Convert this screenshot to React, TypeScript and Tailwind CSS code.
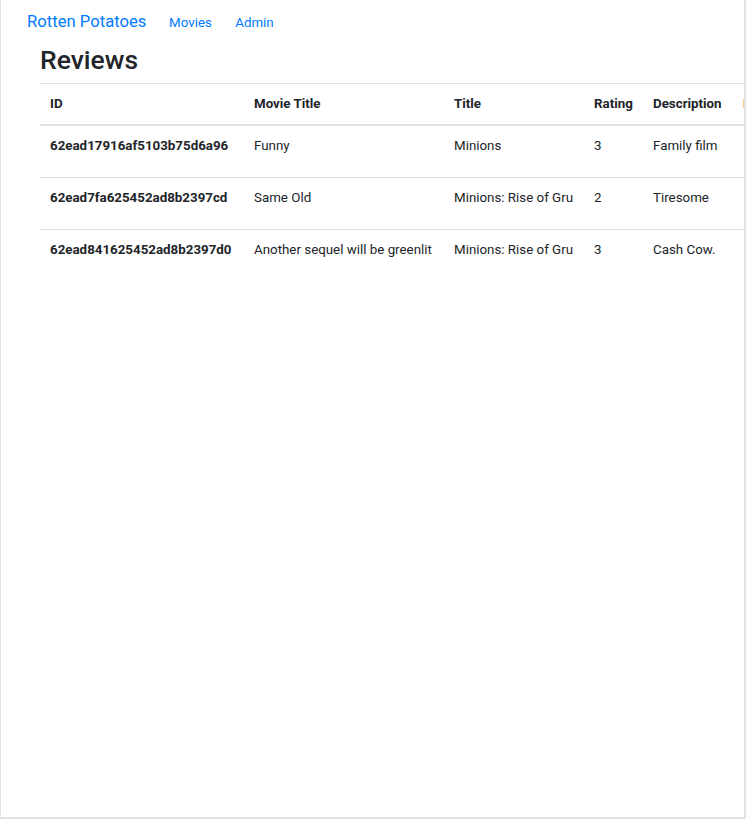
import React from 'react';

const reviews = [
  { id: '62ead17916af5103b75d6a96', movie: 'Funny', title: 'Minions', rating: 3, description: 'Family film' },
  { id: '62ead7fa625452ad8b2397cd', movie: 'Same Old', title: 'Minions: Rise of Gru', rating: 2, description: 'Tiresome' },
  { id: '62ead841625452ad8b2397d0', movie: 'Another sequel will be greenlit', title: 'Minions: Rise of Gru', rating: 3, description: 'Cash Cow.' },
];

const Navbar: React.FC = () => (
  <nav className="flex items-baseline pl-[26px] pt-[9px] pb-[10px]">
    <a className="text-[16.67px] leading-[25px] text-[#007bff] mr-[12px]">Rotten Potatoes</a>
    <a className="pl-[10.67px] pr-[12.67px] text-[13.33px] leading-[20px] text-[#007bff]">Movies</a>
    <a className="px-[10.67px] text-[13.33px] leading-[20px] text-[#007bff]">Admin</a>
  </nav>
);

export default function App() {
  return (
    <div
      className="w-[746px] h-[819px] overflow-hidden bg-white border-l border-r-2 border-b-2 border-[#e2e2e2] text-[13.33px] leading-[20px] text-[#212529]"
      style={{ fontFamily: 'Roboto, "Liberation Sans", sans-serif' }}
    >
      <Navbar />
      <div className="pl-[39px]">
        <h2 className="text-[26.5px] leading-[31.8px] font-medium mb-[7px]">Reviews</h2>
        <table className="table-fixed border-collapse w-[820px] text-left">
          <colgroup>
            <col className="w-[204px]" />
            <col className="w-[200px]" />
            <col className="w-[140px]" />
            <col className="w-[59px]" />
            <col className="w-[90px]" />
            <col className="w-[127px]" />
          </colgroup>
          <thead>
            <tr>
              {['ID', 'Movie Title', 'Title', 'Rating', 'Description', 'Edit'].map((h) => (
                <th
                  key={h}
                  className="p-[10px] font-bold align-bottom border-t border-b-2 border-[#dee2e6] whitespace-nowrap"
                >
                  {h}
                </th>
              ))}
            </tr>
          </thead>
          <tbody>
            {reviews.map((r) => (
              <tr key={r.id}>
                <th className="px-[10px] pt-[10.5px] pb-[9.5px] font-bold align-top border-t border-[#dee2e6] whitespace-nowrap">{r.id}</th>
                <td className="px-[10px] pt-[10.5px] pb-[9.5px] align-top border-t border-[#dee2e6] whitespace-nowrap">{r.movie}</td>
                <td className="px-[10px] pt-[10.5px] pb-[9.5px] align-top border-t border-[#dee2e6] whitespace-nowrap">{r.title}</td>
                <td className="px-[10px] pt-[10.5px] pb-[9.5px] align-top border-t border-[#dee2e6]">{r.rating}</td>
                <td className="px-[10px] pt-[10.5px] pb-[9.5px] align-top border-t border-[#dee2e6] whitespace-nowrap">{r.description}</td>
                <td className="px-[10px] pt-[10.5px] pb-[9.5px] align-top border-t border-[#dee2e6] whitespace-nowrap">
                  <button className="ml-[10px] px-[10px] py-[4.5px] border border-[#007bff] rounded-[4px] text-white bg-[#007bff]">
                    Edit
                  </button>
                </td>
              </tr>
            ))}
          </tbody>
        </table>
      </div>
    </div>
  );
}
